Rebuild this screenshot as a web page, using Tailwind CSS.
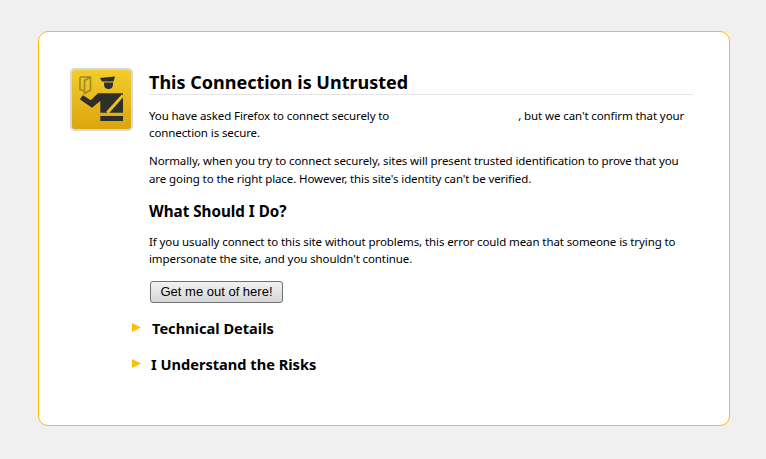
<!DOCTYPE html>
<html lang="en">
<head>
    <meta charset="UTF-8">
    <title>Untrusted Connection</title>
    <script src="https://cdn.jsdelivr.net/npm/@tailwindcss/browser@4"></script>
</head>
<body class="bg-[#f0f0f0] h-[459px] overflow-hidden pt-[31px] pl-[38px] font-['Noto_Sans','Open_Sans',sans-serif] text-black">
    <div class="w-[692px] h-[395px] bg-white border border-[#ffbd09] rounded-[10px] pt-[36px] pl-[31px] flex flex-col">
        <div class="flex">
            <!-- icon -->
            <div class="w-[63px] h-[63px] shrink-0 rounded-[5px] border-2 border-[#d8d8d8] bg-linear-to-b from-[#f2cd2c] to-[#dca509]">
                <svg viewBox="0 0 59 59" class="w-[59px] h-[59px]">
                    <path d="M8 7h10.500v13l-6 3.500V10.500L18.500 7M12.500 21L8 19.500V7" fill="none" stroke="#a08a20" stroke-width="1.600"/>
                    <path d="M28 8l15-1.500-1.500 5H30z" fill="#2e2e2a"/>
                    <path d="M32 12.500h9v2c0 3-2 4.500-4.500 4.500S32 17.500 32 14.500z" fill="#2e2e2a"/>
                    <path d="M7.700 29.300L11 25.300l7.700 5 7.300-7h25v19.400H28.300V31L20 37.700z" fill="#2e2e2a"/>
                    <path d="M28.300 46H51v5H28.300z" fill="#2e2e2a"/>
                    <path d="M51 25.300L35.300 42.700" stroke="#ecc01a" stroke-width="3" fill="none"/>
                </svg>
            </div>
            <div class="ml-[16px] w-[544px]">
                <h1 class="text-[18px] leading-[24px] font-bold mt-[2px] border-b border-[#e5e5e5]">This Connection is Untrusted</h1>
                <div class="text-[11.5px] tracking-[-0.1px] leading-[17px] mt-[12px] whitespace-nowrap">
                    <p>You have asked Firefox to connect securely to<span class="inline-block w-[129px]"></span>, but we can't confirm that your</p>
                    <p>connection is secure.</p>
                </div>
                <div class="text-[11.5px] tracking-[-0.1px] leading-[17.5px] mt-[11px] whitespace-nowrap">
                    <p>Normally, when you try to connect securely, sites will present trusted identification to prove that you</p>
                    <p>are going to the right place. However, this site's identity can't be verified.</p>
                </div>
                <h2 class="text-[15.2px] leading-[20px] font-bold mt-[14px]">What Should I Do?</h2>
                <div class="text-[11.5px] tracking-[-0.1px] leading-[17px] mt-[12px] whitespace-nowrap">
                    <p>If you usually connect to this site without problems, this error could mean that someone is trying to</p>
                    <p>impersonate the site, and you shouldn't continue.</p>
                </div>
                <button class="block mt-[14px] ml-[1px] w-[133px] h-[22px] rounded-[3px] border border-[#707070] bg-linear-to-b from-[#f2f2f2] to-[#d6d6d6] font-['Liberation_Sans',sans-serif] text-[13px] leading-[20px] text-center">Get me out of here!</button>
            </div>
        </div>
        <div class="ml-[62px] mt-[15px] flex items-center h-[20px]">
            <svg viewBox="0 0 9 9" class="w-[9px] h-[9px] mb-[1px]"><path d="M0 0l9 4.500L0 9z" fill="#ffbd09"/></svg>
            <span class="ml-[11px] text-[14.6px] font-bold leading-[20px]">Technical Details</span>
        </div>
        <div class="ml-[62px] mt-[16px] flex items-center h-[20px]">
            <svg viewBox="0 0 9 9" class="w-[9px] h-[9px] mb-[1px]"><path d="M0 0l9 4.500L0 9z" fill="#ffbd09"/></svg>
            <span class="ml-[10px] text-[14.6px] font-bold leading-[20px]">I Understand the Risks</span>
        </div>
    </div>
</body>
</html>
